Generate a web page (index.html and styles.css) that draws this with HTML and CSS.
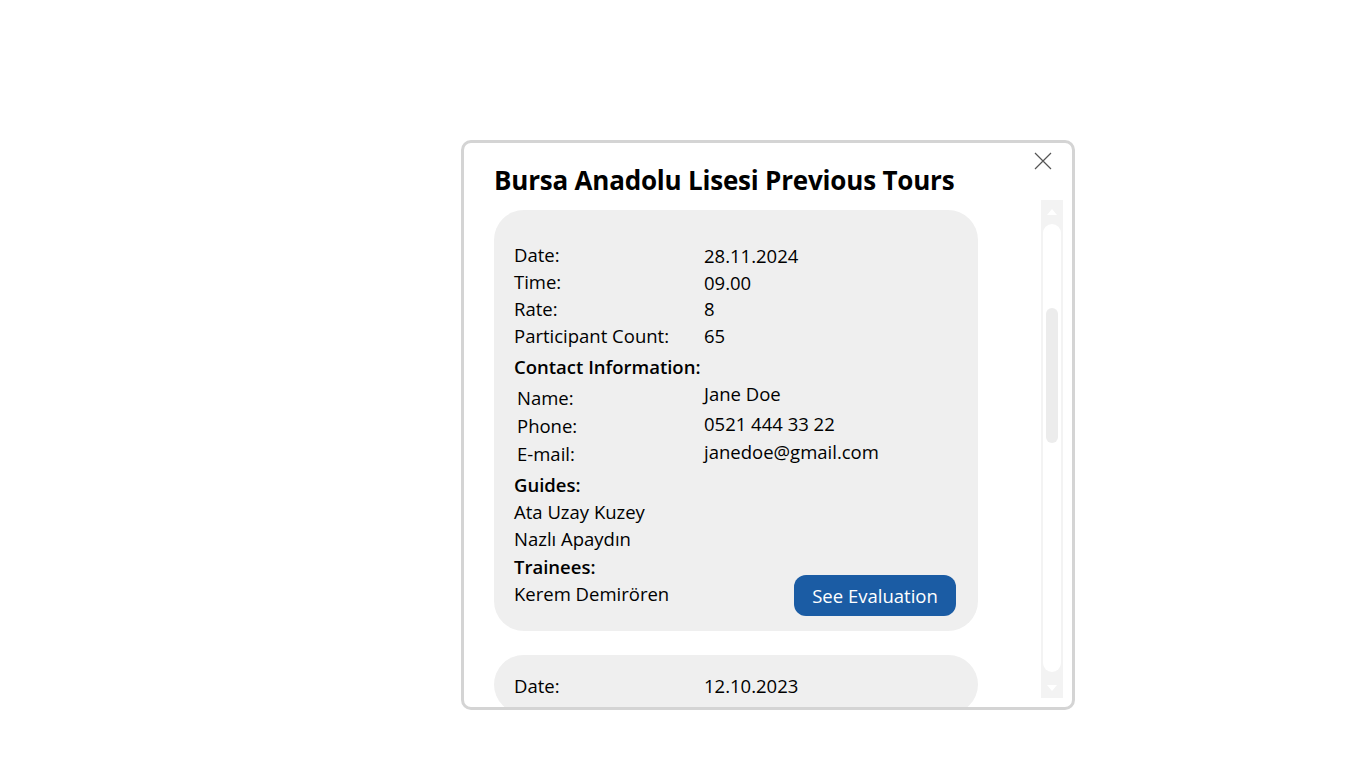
FILE: index.html
```html
<!DOCTYPE html>
<html>
<head>
<meta charset="utf-8">
<link rel="stylesheet" href="styles.css">
</head>
<body>
<div class="modal">
  <button class="close" aria-label="Close">
    <svg width="18" height="18" viewBox="0 0 18 18"><path d="M1 1L17 17M17 1L1 17" stroke="#555" stroke-width="1.2" fill="none"/></svg>
  </button>
  <h1 class="title">Bursa Anadolu Lisesi Previous Tours</h1>
  <div class="body">
    <div class="list">
      <div class="card first">
        <div class="grid">
          <span>Date:</span><span class="down">28.11.2024</span>
          <span>Time:</span><span class="down">09.00</span>
          <span>Rate:</span><span>8</span>
          <span>Participant Count:</span><span>65</span>
        </div>
        <div class="head contact-head">Contact Information:</div>
        <div class="grid contact">
          <span class="lbl">Name:</span><span class="val up">Jane Doe</span>
          <span class="lbl">Phone:</span><span class="val">0521 444 33 22</span>
          <span class="lbl">E-mail:</span><span class="val">janedoe@gmail.com</span>
        </div>
        <div class="head guides-head">Guides:</div>
        <div class="line">Ata Uzay Kuzey</div>
        <div class="line">Nazlı Apaydın</div>
        <div class="bottom">
          <div class="names">
            <div class="head trainees-head">Trainees:</div>
            <div class="line">Kerem Demirören</div>
          </div>
          <button class="eval">See Evaluation</button>
        </div>
      </div>
      <div class="card">
        <div class="grid">
          <span>Date:</span><span>12.10.2023</span>
        </div>
      </div>
    </div>
    <div class="scrollbar">
      <div class="arrow up-arrow"></div>
      <div class="track"><div class="thumb"></div></div>
      <div class="arrow down-arrow"></div>
    </div>
  </div>
</div>
</body>
</html>
```
FILE: styles.css
```css
* { box-sizing: border-box; }
html, body { margin: 0; padding: 0; background: #fff; }
body {
  font-family: "Open Sans", "Noto Sans", sans-serif;
  color: #000;
  padding: 140px 0 0 461px;
  height: 768px;
  overflow: hidden;
}
.modal {
  position: relative;
  width: 614px;
  height: 570px;
  border: 3px solid #d4d4d4;
  border-radius: 10px;
  background: #fff;
  display: flex;
  flex-direction: column;
  overflow: hidden;
}
.close {
  position: absolute;
  top: 9px;
  right: 20px;
  width: 18px;
  height: 18px;
  padding: 0;
  border: 0;
  background: none;
  display: flex;
}
.title {
  margin: 0;
  padding: 22px 0 0 30px;
  height: 57px;
  font-size: 26px;
  line-height: 30px;
  font-weight: 700;
  letter-spacing: -0.2px;
}
.body {
  flex: 1;
  display: flex;
  padding-right: 9px;
  min-height: 0;
}
.list {
  flex: 1;
  padding: 10px 0 0 30px;
  overflow: hidden;
}
.card {
  width: 484px;
  background: #efefef;
  border-radius: 30px;
  padding: 17px 22px 15px 20px;
  margin-bottom: 24px;
  font-size: 18.5px;
}
.card.first { padding-top: 31px; }
.grid {
  display: grid;
  grid-template-columns: 190px 1fr;
  line-height: 27px;
}
.grid .down { position: relative; top: 1px; }
.head {
  font-weight: 600;
  line-height: 27px;
}
.contact-head { margin-top: 4px; }
.contact { line-height: 28px; margin-top: 2px; }
.contact .lbl { padding-left: 3px; position: relative; top: 2px; }
.contact .val.up { position: relative; top: -2px; }
.guides-head { margin-top: 5px; }
.line { line-height: 27px; }
.trainees-head { margin-top: 1px; }
.bottom {
  display: flex;
  justify-content: space-between;
  align-items: flex-end;
}
.names { padding-bottom: 9px; }
.eval {
  width: 162px;
  height: 41px;
  border: 0;
  border-radius: 12px;
  background: #1b5ca4;
  color: #fff;
  font-family: inherit;
  font-size: 18.5px;
  padding: 0;
}
.scrollbar {
  width: 22px;
  height: 498px;
  background: #f3f3f3;
  display: flex;
  flex-direction: column;
  align-items: center;
  padding: 0 2px;
}
.arrow {
  width: 0;
  height: 0;
  border-left: 5px solid transparent;
  border-right: 5px solid transparent;
}
.up-arrow { border-bottom: 6px solid #fff; margin: 9px 0 9px; }
.down-arrow { border-top: 6px solid #fff; margin: 13px 0 0; }
.track {
  width: 18px;
  height: 448px;
  background: #fff;
  border-radius: 9px;
  padding: 84px 3px 0;
}
.thumb {
  height: 135px;
  background: #ececec;
  border-radius: 6px;
}
```
